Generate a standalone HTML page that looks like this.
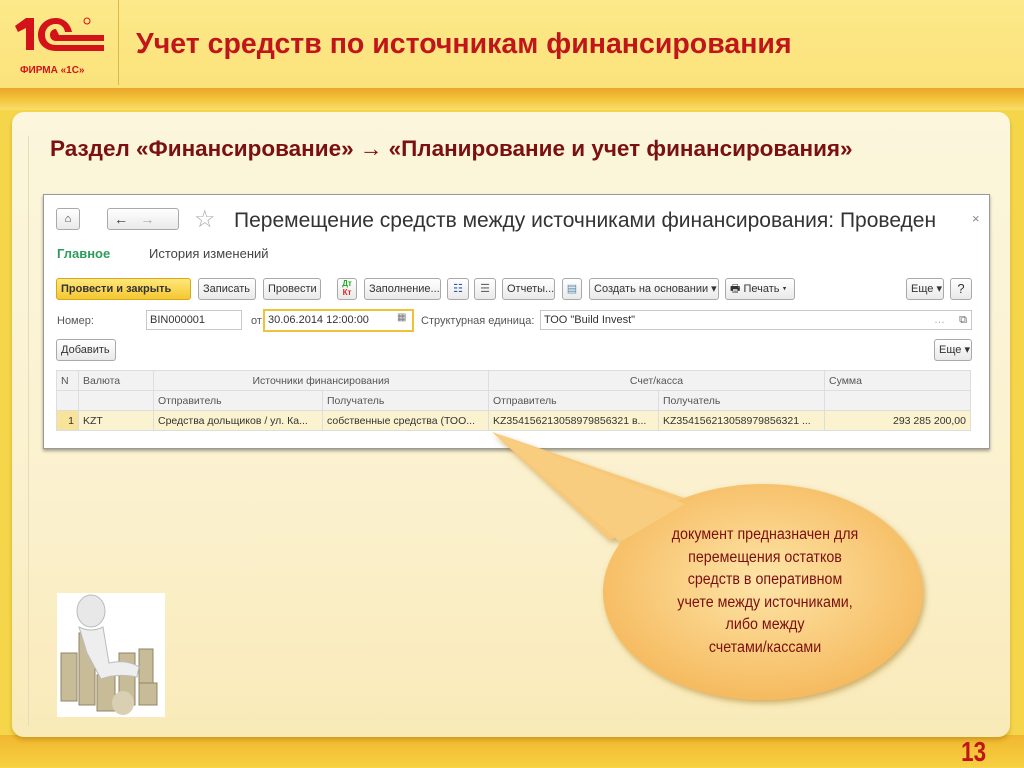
<!DOCTYPE html>
<html><head><meta charset="utf-8">
<style>
*{margin:0;padding:0;box-sizing:border-box}
body{width:1024px;height:767px;overflow:hidden;position:relative;font-family:"Liberation Sans",sans-serif;background:#f5d64a}
.a{position:absolute}
.hdr{left:0;top:0;width:1024px;height:92px;background:linear-gradient(#fde98a,#fbe27a)}
.band{left:0;top:88px;width:1024px;height:22px;background:linear-gradient(#e8a628,#f3c43c 50%,#f8de6a)}
.bot{left:0;top:735px;width:1024px;height:32px;background:linear-gradient(#f0b730,#f7d040)}
.panel{left:12px;top:112px;width:998px;height:625px;border-radius:12px;background:linear-gradient(#fbf6dc,#fbf1cf 60%,#f9eab8);box-shadow:0 3px 4px rgba(150,100,0,.35)}
.t1{left:136px;top:28px;font-size:28.5px;font-weight:bold;color:#c0161b}
.t2{left:50px;top:136px;font-size:22.5px;font-weight:bold;color:#7a1010}
.win{left:43px;top:194px;width:947px;height:255px;background:#fff;border:1px solid #999;box-shadow:0 2px 3px rgba(0,0,0,.35)}
.btn{position:absolute;height:22px;border:1px solid #a9a9a9;border-radius:3px;background:linear-gradient(#fff,#e9e9e9);font-size:11px;color:#333;line-height:20px;padding:0 4px;white-space:nowrap}
.lbl{position:absolute;font-size:11px;color:#555}
.inp{position:absolute;height:20px;border:1px solid #c8c8c8;font-size:11px;line-height:18px;padding-left:3px;color:#333;background:#fff}
table{border-collapse:collapse;font-size:10.5px;color:#555}
td{border:1px solid #ddd;padding:0 4px;height:20px;white-space:nowrap;overflow:hidden}
.th td{background:#f2f2f2}
</style></head><body>
<div class="a hdr"></div>
<div class="a" style="left:118px;top:0;width:1px;height:85px;background:#d9b94a"></div>
<div class="a band"></div>
<div class="a bot"></div>
<svg class="a" style="left:12px;top:14px" width="96" height="65" viewBox="0 0 96 65">
<path d="M3 12 L14 4 L22 4 L22 36 L14 36 L14 14 L6 18 Z" fill="#d4121a"/>
<path d="M60 18 C58 8 50 4 44 4 C33 4 26 12 26 21 C26 30 33 37 44 37 L92 37 L92 31 L44 31 C37 31 33 27 33 21 C33 14 38 10 44 10 C49 10 52 13 53 18 Z" fill="#d4121a"/>
<path d="M44 15 C40 15 38 18 38 21 C38 24 40 27 44 27 L92 27 L92 21 L47 21 Z" fill="#d4121a"/>
<circle cx="75" cy="7" r="3" fill="none" stroke="#d4121a" stroke-width="1"/>
<text x="8" y="59" font-family="Liberation Sans" font-weight="bold" font-size="10" fill="#d4121a">ФИРМА «1С»</text>
</svg>
<div class="a t1">Учет средств по источникам финансирования</div>
<div class="a panel"></div>
<div class="a" style="left:28px;top:136px;width:1px;height:590px;background:#e6dcb8"></div>
<div class="a t2">Раздел «Финансирование» → «Планирование и учет финансирования»</div>

<div class="a win">
 <div class="btn" style="left:12px;top:13px;width:24px;padding:0;text-align:center">&#8962;</div>
 <div class="btn" style="left:63px;top:13px;width:72px;padding:0">&nbsp;&nbsp;<b style="font-size:14px">←</b>&nbsp;&nbsp;&nbsp;&nbsp;<span style="color:#aaa;font-size:14px">→</span></div>
 <div class="a" style="left:150px;top:10px;font-size:24px;color:#aaa">☆</div>
 <div class="a" style="left:190px;top:14px;font-size:21px;color:#333">Перемещение средств между источниками финансирования: Проведен</div>
 <div class="a" style="left:928px;top:16px;font-size:13px;color:#888">×</div>
 <div class="a" style="left:13px;top:51px;font-size:13px;color:#2e9c5a;font-weight:bold">Главное</div>
 <div class="a" style="left:105px;top:51px;font-size:13px;color:#444">История изменений</div>
 <div class="btn" style="left:12px;top:83px;width:135px;background:linear-gradient(#ffe77a,#f5c731);border-color:#d6a91a;font-weight:bold;color:#333">Провести и закрыть</div>
 <div class="btn" style="left:154px;top:83px;width:58px">Записать</div>
 <div class="btn" style="left:219px;top:83px;width:58px">Провести</div>
 <div class="btn" style="left:293px;top:83px;width:20px;padding:0;font-size:8px;line-height:9px;text-align:center;color:#2a2;font-weight:bold">Дт<br><span style="color:#d22">Кт</span></div>
 <div class="btn" style="left:320px;top:83px;width:77px">Заполнение...</div>
 <div class="btn" style="left:403px;top:83px;width:22px;padding:0;text-align:center;color:#35a">☷</div>
 <div class="btn" style="left:430px;top:83px;width:22px;padding:0;text-align:center;color:#666">☰</div>
 <div class="btn" style="left:458px;top:83px;width:53px">Отчеты...</div>
 <div class="btn" style="left:518px;top:83px;width:20px;padding:0;text-align:center;color:#58a">▤</div>
 <div class="btn" style="left:545px;top:83px;width:130px">Создать на основании ▾</div>
 <div class="btn" style="left:681px;top:83px;width:70px">🖶 Печать ▾</div>
 <div class="btn" style="left:862px;top:83px;width:38px">Еще ▾</div>
 <div class="btn" style="left:906px;top:83px;width:22px;padding:0;text-align:center;font-size:13px">?</div>
 <div class="lbl" style="left:13px;top:120px">Номер:</div>
 <div class="inp" style="left:102px;top:115px;width:96px">BIN000001</div>
 <div class="lbl" style="left:207px;top:120px">от:</div>
 <div class="inp" style="left:219px;top:114px;width:151px;height:23px;border:2px solid #f0c23a">30.06.2014 12:00:00</div>
 <div class="a" style="left:353px;top:117px;font-size:10px;color:#777">▦</div>
 <div class="lbl" style="left:377px;top:120px">Структурная единица:</div>
 <div class="inp" style="left:496px;top:115px;width:432px">ТОО "Build Invest"<span style="position:absolute;right:26px;top:0;color:#aaa">…</span><span style="position:absolute;right:4px;top:0;color:#666">⧉</span></div>
 <div class="btn" style="left:12px;top:144px;width:60px">Добавить</div>
 <div class="btn" style="left:890px;top:144px;width:38px">Еще ▾</div>
 <table class="a" style="left:12px;top:175px;width:915px;table-layout:fixed">
  <colgroup><col style="width:22px"><col style="width:75px"><col style="width:169px"><col style="width:166px"><col style="width:170px"><col style="width:166px"><col></colgroup>
  <tr class="th"><td>N</td><td>Валюта</td><td colspan="2" style="text-align:center">Источники финансирования</td><td colspan="2" style="text-align:center">Счет/касса</td><td>Сумма</td></tr>
  <tr class="th"><td></td><td></td><td>Отправитель</td><td>Получатель</td><td>Отправитель</td><td>Получатель</td><td></td></tr>
  <tr style="background:#fbf3cf;color:#333"><td style="text-align:right;background:#f7e49a">1</td><td>KZT</td><td>Средства дольщиков / ул. Ка...</td><td>собственные средства (ТОО...</td><td>KZ354156213058979856321 в...</td><td>KZ354156213058979856321 ...</td><td style="text-align:right">293 285 200,00</td></tr>
  <tr><td style="border:none;height:16px" colspan="7"></td></tr>
 </table>
</div>

<svg class="a" style="left:470px;top:420px" width="480" height="300">
<defs><radialGradient id="g" cx="50%" cy="45%" r="60%"><stop offset="0" stop-color="#fde5a8"/><stop offset="1" stop-color="#f5b658"/></radialGradient>
<filter id="s"><feDropShadow dx="2" dy="3" stdDeviation="3" flood-color="#a07010" flood-opacity=".5"/></filter></defs>
<g filter="url(#s)">
<path d="M22 12 L220 80 L140 120 Z" fill="#f8c878"/>
<ellipse cx="293" cy="172" rx="160" ry="108" fill="url(#g)"/>
<path d="M24 13 L215 84 L150 122 Z" fill="#f9cd80"/>
</g>
</svg>
<div class="a" style="left:605px;top:524px;width:320px;text-align:center;font-size:15.5px;line-height:22.5px;color:#7a1010;transform:scaleX(.92)">документ предназначен для<br>перемещения остатков<br>средств в оперативном<br>учете между источниками,<br>либо между<br>счетами/кассами</div>

<div class="a" style="left:57px;top:593px;width:108px;height:124px;background:#fff"></div>
<svg class="a" style="left:57px;top:593px" width="108" height="124">
<g fill="#c8bb98" stroke="#8f8466" stroke-width="1">
<rect x="4" y="60" width="16" height="48"/><rect x="22" y="40" width="16" height="72"/><rect x="40" y="82" width="18" height="36"/><rect x="62" y="60" width="16" height="52"/><rect x="82" y="56" width="14" height="46"/><rect x="82" y="90" width="18" height="22"/>
</g>
<ellipse cx="66" cy="110" rx="11" ry="12" fill="#d9cfb3"/>
<ellipse cx="34" cy="18" rx="14" ry="16" fill="#e8e8e8" stroke="#bbb"/>
<path d="M22 34 Q34 40 46 34 L52 70 Q70 66 82 74 L80 84 Q60 80 44 86 L30 60 Z" fill="#eee" stroke="#bbb"/>
</svg>

<div class="a" style="left:958px;top:736px;font-size:28px;font-weight:bold;color:#c0161b;transform:scaleX(.8)">13</div>
</body></html>
